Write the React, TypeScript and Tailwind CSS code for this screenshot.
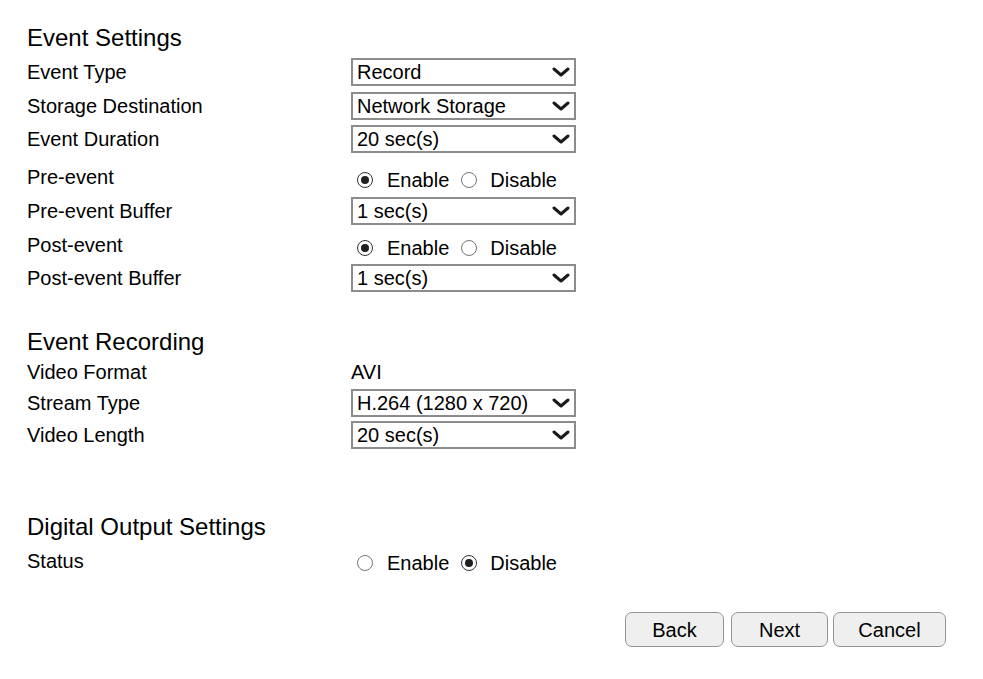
import React from "react";

function Chevron() {
  return (
    <svg width="18" height="10" viewBox="0 0 18 10" className="shrink-0">
      <path d="M2 2 L9 8 L16 2" fill="none" stroke="#1a1a1a" strokeWidth="3" strokeLinecap="round" strokeLinejoin="round" />
    </svg>
  );
}

function Select({ value }: { value: string }) {
  return (
    <div className="w-[225px] h-[28px] border-2 border-[#8c8c8c] bg-white flex items-center justify-between pl-[4px] pr-[4px]">
      <span className="leading-[24px] whitespace-nowrap">{value}</span>
      <Chevron />
    </div>
  );
}

function Radio({ checked }: { checked: boolean }) {
  return checked ? (
    <div className="w-[16px] h-[16px] rounded-full border border-[#333333] bg-white flex items-center justify-center shrink-0">
      <div className="w-[8px] h-[8px] rounded-full bg-[#1f1f1f]" />
    </div>
  ) : (
    <div className="w-[16px] h-[16px] rounded-full border border-[#777777] bg-white shrink-0" />
  );
}

function RadioPair({ enable, pt }: { enable: boolean; pt: string }) {
  return (
    <div className={`flex items-center ${pt}`}>
      <div className="ml-[6px] flex">
        <Radio checked={enable} />
      </div>
      <span className="ml-[14px] leading-[24px]">Enable</span>
      <div className="ml-[12px] flex">
        <Radio checked={!enable} />
      </div>
      <span className="ml-[13px] leading-[24px]">Disable</span>
    </div>
  );
}

function Label({ children }: { children: React.ReactNode }) {
  return <div className="w-[324px] shrink-0 leading-[24px]">{children}</div>;
}

function SelectRow({ label, value, h }: { label: string; value: string; h: string }) {
  return (
    <div className={`flex items-center ${h}`}>
      <Label>{label}</Label>
      <Select value={value} />
    </div>
  );
}

function Button({ children, w }: { children: React.ReactNode; w: string }) {
  return (
    <button className={`${w} h-[35px] rounded-[7px] border border-[#949494] bg-[#efefef] text-[20px] leading-[24px] text-black flex items-center justify-center`}>
      {children}
    </button>
  );
}

export default function App() {
  return (
    <div className="w-[983px] h-[679px] bg-white pl-[27px] pt-[24px] font-['Liberation_Sans',Arial,sans-serif] text-[20px] text-black">
      <h2 className="text-[24px] leading-[28px] h-[31px]">Event Settings</h2>
      <SelectRow label="Event Type" value="Record" h="h-[34px]" />
      <SelectRow label="Storage Destination" value="Network Storage" h="h-[33px]" />
      <SelectRow label="Event Duration" value="20 sec(s)" h="h-[34px]" />
      <div className="flex items-center h-[34px] mt-[4px]">
        <Label>Pre-event</Label>
        <RadioPair enable={true} pt="pt-[6px]" />
      </div>
      <SelectRow label="Pre-event Buffer" value="1 sec(s)" h="h-[34px]" />
      <div className="flex items-center h-[33px]">
        <Label>Post-event</Label>
        <RadioPair enable={true} pt="pt-[6px]" />
      </div>
      <SelectRow label="Post-event Buffer" value="1 sec(s)" h="h-[34px]" />

      <h2 className="text-[24px] leading-[28px] mt-[33px]">Event Recording</h2>
      <div className="flex items-center h-[32px]">
        <Label>Video Format</Label>
        <span className="leading-[24px]">AVI</span>
      </div>
      <SelectRow label="Stream Type" value="H.264 (1280 x 720)" h="h-[30px]" />
      <SelectRow label="Video Length" value="20 sec(s)" h="h-[34px]" />

      <h2 className="text-[24px] leading-[28px] mt-[61px]">Digital Output Settings</h2>
      <div className="flex items-center h-[34px] mt-[3px]">
        <Label>Status</Label>
        <RadioPair enable={false} pt="pt-[4px]" />
      </div>

      <div className="flex justify-end pr-[37px] mt-[34px]">
        <Button w="w-[99px]">Back</Button>
        <div className="w-[7px]" />
        <Button w="w-[97px]">Next</Button>
        <div className="w-[5px]" />
        <Button w="w-[113px]">Cancel</Button>
      </div>
    </div>
  );
}
